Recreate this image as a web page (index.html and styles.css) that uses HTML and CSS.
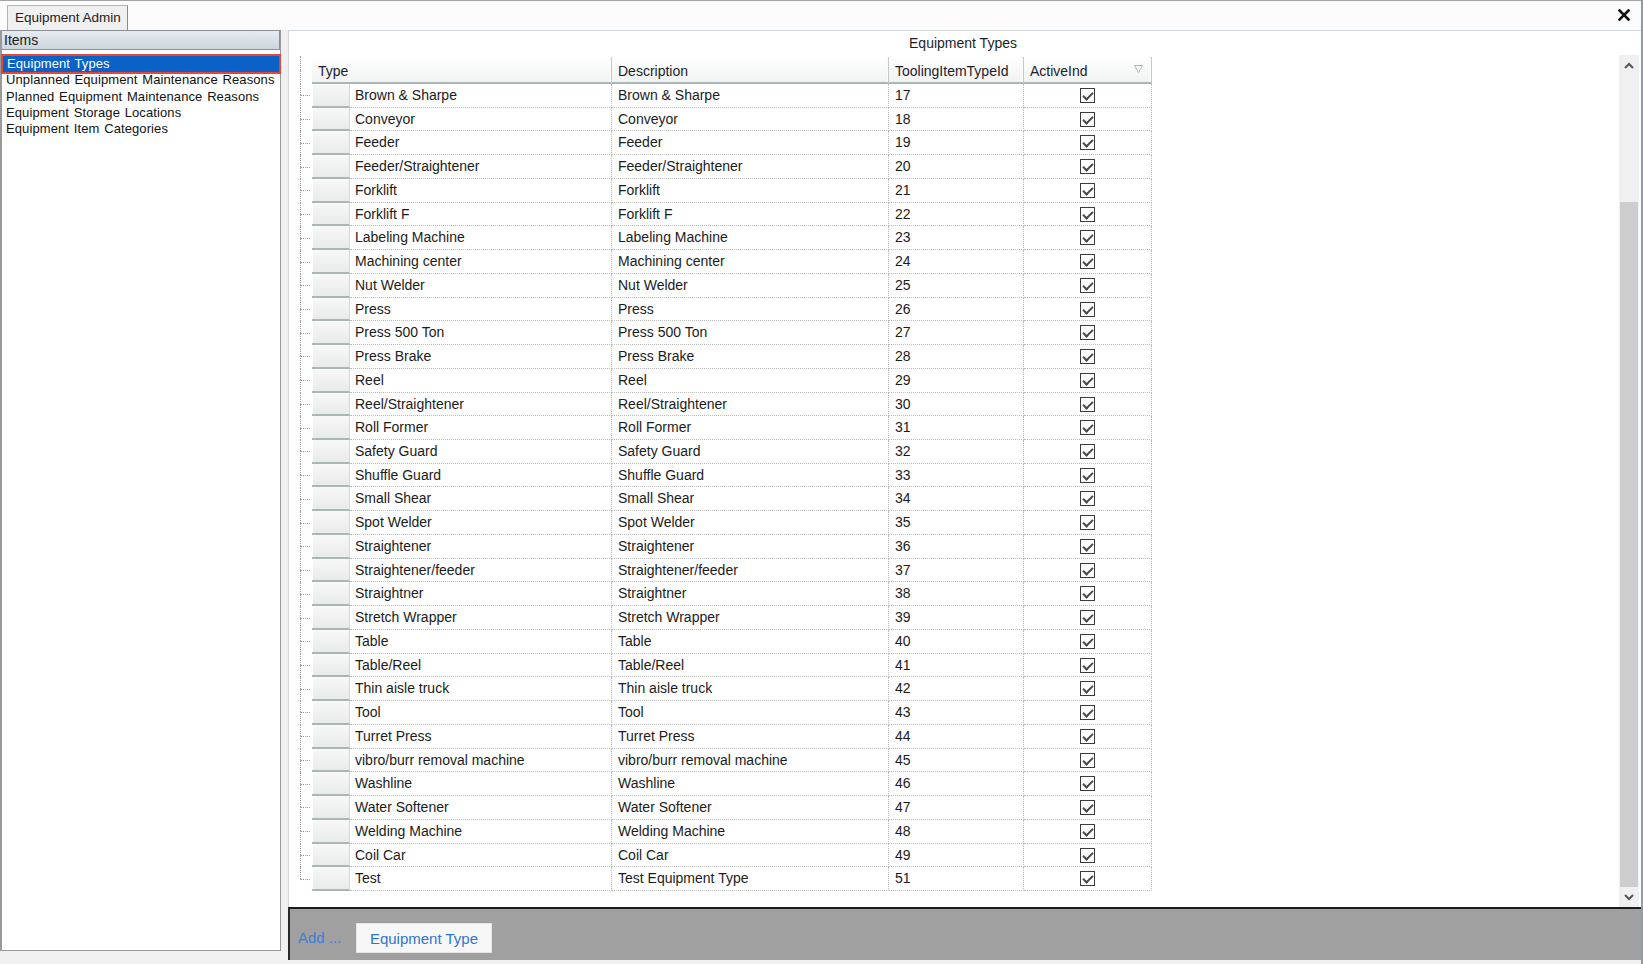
FILE: index.html
```html
<!DOCTYPE html>
<html>
<head>
<meta charset="utf-8">
<title>Equipment Admin</title>
<link rel="stylesheet" href="styles.css">
</head>
<body>
<div class="app">
  <div class="tabstrip">
    <div class="tab">Equipment Admin</div>
    <div class="close"><svg width="12" height="12" viewBox="0 0 12 12"><path d="M1.5 1.5 L10.5 10.5 M10.5 1.5 L1.5 10.5" stroke="#111" stroke-width="2.6" stroke-linecap="square"/></svg></div>
  </div>
  <div class="main">
    <div class="left">
      <div class="items-head">Items</div>
      <ul class="nav">
        <li class="selected">Equipment Types</li>
        <li>Unplanned Equipment Maintenance Reasons</li>
        <li>Planned Equipment Maintenance Reasons</li>
        <li>Equipment Storage Locations</li>
        <li>Equipment Item Categories</li>
      </ul>
    </div>
    <div class="right">
      <div class="content">
        <div class="title">Equipment Types</div>
        <div class="body">
          <div class="gridwrap">
            <div class="hrow">
              <span class="stub stub-head"></span>
              <span class="h h-type">Type</span>
              <span class="h h-desc">Description</span>
              <span class="h h-id">ToolingItemTypeId</span>
              <span class="h h-act">ActiveInd<svg class="filter" width="9" height="8" viewBox="0 0 9 8"><path d="M0.5 0.5 H8.5 L4.5 7.5 Z" fill="none" stroke="#a9b0b8"/></svg></span>
            </div>
            <div class="row"><span class="stub"></span><span class="sel"></span><span class="c c-type">Brown &amp; Sharpe</span><span class="c c-desc">Brown &amp; Sharpe</span><span class="c c-id">17</span><span class="c c-act"><span class="cb"></span></span></div>
            <div class="row"><span class="stub"></span><span class="sel"></span><span class="c c-type">Conveyor</span><span class="c c-desc">Conveyor</span><span class="c c-id">18</span><span class="c c-act"><span class="cb"></span></span></div>
            <div class="row"><span class="stub"></span><span class="sel"></span><span class="c c-type">Feeder</span><span class="c c-desc">Feeder</span><span class="c c-id">19</span><span class="c c-act"><span class="cb"></span></span></div>
            <div class="row"><span class="stub"></span><span class="sel"></span><span class="c c-type">Feeder/Straightener</span><span class="c c-desc">Feeder/Straightener</span><span class="c c-id">20</span><span class="c c-act"><span class="cb"></span></span></div>
            <div class="row"><span class="stub"></span><span class="sel"></span><span class="c c-type">Forklift</span><span class="c c-desc">Forklift</span><span class="c c-id">21</span><span class="c c-act"><span class="cb"></span></span></div>
            <div class="row"><span class="stub"></span><span class="sel"></span><span class="c c-type">Forklift F</span><span class="c c-desc">Forklift F</span><span class="c c-id">22</span><span class="c c-act"><span class="cb"></span></span></div>
            <div class="row"><span class="stub"></span><span class="sel"></span><span class="c c-type">Labeling Machine</span><span class="c c-desc">Labeling Machine</span><span class="c c-id">23</span><span class="c c-act"><span class="cb"></span></span></div>
            <div class="row"><span class="stub"></span><span class="sel"></span><span class="c c-type">Machining center</span><span class="c c-desc">Machining center</span><span class="c c-id">24</span><span class="c c-act"><span class="cb"></span></span></div>
            <div class="row"><span class="stub"></span><span class="sel"></span><span class="c c-type">Nut Welder</span><span class="c c-desc">Nut Welder</span><span class="c c-id">25</span><span class="c c-act"><span class="cb"></span></span></div>
            <div class="row"><span class="stub"></span><span class="sel"></span><span class="c c-type">Press</span><span class="c c-desc">Press</span><span class="c c-id">26</span><span class="c c-act"><span class="cb"></span></span></div>
            <div class="row"><span class="stub"></span><span class="sel"></span><span class="c c-type">Press 500 Ton</span><span class="c c-desc">Press 500 Ton</span><span class="c c-id">27</span><span class="c c-act"><span class="cb"></span></span></div>
            <div class="row"><span class="stub"></span><span class="sel"></span><span class="c c-type">Press Brake</span><span class="c c-desc">Press Brake</span><span class="c c-id">28</span><span class="c c-act"><span class="cb"></span></span></div>
            <div class="row"><span class="stub"></span><span class="sel"></span><span class="c c-type">Reel</span><span class="c c-desc">Reel</span><span class="c c-id">29</span><span class="c c-act"><span class="cb"></span></span></div>
            <div class="row"><span class="stub"></span><span class="sel"></span><span class="c c-type">Reel/Straightener</span><span class="c c-desc">Reel/Straightener</span><span class="c c-id">30</span><span class="c c-act"><span class="cb"></span></span></div>
            <div class="row"><span class="stub"></span><span class="sel"></span><span class="c c-type">Roll Former</span><span class="c c-desc">Roll Former</span><span class="c c-id">31</span><span class="c c-act"><span class="cb"></span></span></div>
            <div class="row"><span class="stub"></span><span class="sel"></span><span class="c c-type">Safety Guard</span><span class="c c-desc">Safety Guard</span><span class="c c-id">32</span><span class="c c-act"><span class="cb"></span></span></div>
            <div class="row"><span class="stub"></span><span class="sel"></span><span class="c c-type">Shuffle Guard</span><span class="c c-desc">Shuffle Guard</span><span class="c c-id">33</span><span class="c c-act"><span class="cb"></span></span></div>
            <div class="row"><span class="stub"></span><span class="sel"></span><span class="c c-type">Small Shear</span><span class="c c-desc">Small Shear</span><span class="c c-id">34</span><span class="c c-act"><span class="cb"></span></span></div>
            <div class="row"><span class="stub"></span><span class="sel"></span><span class="c c-type">Spot Welder</span><span class="c c-desc">Spot Welder</span><span class="c c-id">35</span><span class="c c-act"><span class="cb"></span></span></div>
            <div class="row"><span class="stub"></span><span class="sel"></span><span class="c c-type">Straightener</span><span class="c c-desc">Straightener</span><span class="c c-id">36</span><span class="c c-act"><span class="cb"></span></span></div>
            <div class="row"><span class="stub"></span><span class="sel"></span><span class="c c-type">Straightener/feeder</span><span class="c c-desc">Straightener/feeder</span><span class="c c-id">37</span><span class="c c-act"><span class="cb"></span></span></div>
            <div class="row"><span class="stub"></span><span class="sel"></span><span class="c c-type">Straightner</span><span class="c c-desc">Straightner</span><span class="c c-id">38</span><span class="c c-act"><span class="cb"></span></span></div>
            <div class="row"><span class="stub"></span><span class="sel"></span><span class="c c-type">Stretch Wrapper</span><span class="c c-desc">Stretch Wrapper</span><span class="c c-id">39</span><span class="c c-act"><span class="cb"></span></span></div>
            <div class="row"><span class="stub"></span><span class="sel"></span><span class="c c-type">Table</span><span class="c c-desc">Table</span><span class="c c-id">40</span><span class="c c-act"><span class="cb"></span></span></div>
            <div class="row"><span class="stub"></span><span class="sel"></span><span class="c c-type">Table/Reel</span><span class="c c-desc">Table/Reel</span><span class="c c-id">41</span><span class="c c-act"><span class="cb"></span></span></div>
            <div class="row"><span class="stub"></span><span class="sel"></span><span class="c c-type">Thin aisle truck</span><span class="c c-desc">Thin aisle truck</span><span class="c c-id">42</span><span class="c c-act"><span class="cb"></span></span></div>
            <div class="row"><span class="stub"></span><span class="sel"></span><span class="c c-type">Tool</span><span class="c c-desc">Tool</span><span class="c c-id">43</span><span class="c c-act"><span class="cb"></span></span></div>
            <div class="row"><span class="stub"></span><span class="sel"></span><span class="c c-type">Turret Press</span><span class="c c-desc">Turret Press</span><span class="c c-id">44</span><span class="c c-act"><span class="cb"></span></span></div>
            <div class="row"><span class="stub"></span><span class="sel"></span><span class="c c-type">vibro/burr removal machine</span><span class="c c-desc">vibro/burr removal machine</span><span class="c c-id">45</span><span class="c c-act"><span class="cb"></span></span></div>
            <div class="row"><span class="stub"></span><span class="sel"></span><span class="c c-type">Washline</span><span class="c c-desc">Washline</span><span class="c c-id">46</span><span class="c c-act"><span class="cb"></span></span></div>
            <div class="row"><span class="stub"></span><span class="sel"></span><span class="c c-type">Water Softener</span><span class="c c-desc">Water Softener</span><span class="c c-id">47</span><span class="c c-act"><span class="cb"></span></span></div>
            <div class="row"><span class="stub"></span><span class="sel"></span><span class="c c-type">Welding Machine</span><span class="c c-desc">Welding Machine</span><span class="c c-id">48</span><span class="c c-act"><span class="cb"></span></span></div>
            <div class="row"><span class="stub"></span><span class="sel"></span><span class="c c-type">Coil Car</span><span class="c c-desc">Coil Car</span><span class="c c-id">49</span><span class="c c-act"><span class="cb"></span></span></div>
            <div class="row last"><span class="stub"></span><span class="sel"></span><span class="c c-type">Test</span><span class="c c-desc">Test Equipment Type</span><span class="c c-id">51</span><span class="c c-act"><span class="cb"></span></span></div>
          </div>
          <div class="scrollbar">
            <div class="sb-btn"><svg width="10" height="7" viewBox="0 0 10 7"><path d="M1 6 L5 2 L9 6" fill="none" stroke="#555" stroke-width="2"/></svg></div>
            <div class="sb-track"><div class="sb-thumb"></div></div>
            <div class="sb-btn"><svg width="10" height="7" viewBox="0 0 10 7"><path d="M1 1 L5 5 L9 1" fill="none" stroke="#555" stroke-width="2"/></svg></div>
          </div>
        </div>
      </div>
      <div class="actionbar">
        <span class="add">Add ...</span>
        <span class="btn">Equipment Type</span>
      </div>
    </div>
  </div>
</div>
</body>
</html>
```

FILE: styles.css
```css
* { box-sizing: border-box; }
html, body { margin: 0; padding: 0; }
body {
  width: 1643px;
  height: 964px;
  overflow: hidden;
  background: #f0f0f0;
  font-family: "Liberation Sans", Arial, sans-serif;
  color: #1b1b1b;
}
.app {
  height: 964px;
  display: flex;
  flex-direction: column;
  border-right: 2px solid #8c9bb0;
}
.tabstrip {
  height: 30px;
  flex: none;
  display: flex;
  align-items: flex-end;
  justify-content: space-between;
  background: #fcfcfc;
  border-top: 1px solid #a3a3a3;
}
.tab {
  margin-left: 7px;
  height: 25px;
  padding: 4px 6px 0 7px;
  font-size: 13.5px;
  background: #f0f0f0;
  border: 1px solid #b4b4b4;
  border-right-color: #8a8a8a;
  border-bottom: none;
  color: #222;
}
.close {
  align-self: flex-start;
  margin-top: 8px;
  margin-right: 11px;
  line-height: 0;
}
.main {
  flex: 1;
  display: flex;
  gap: 7px;
  min-height: 0;
}
.left {
  width: 281px;
  margin-bottom: 13px;
  background: #fff;
  border: 1px solid #9a9a9a;
  border-top: none;
  border-left-width: 2px;
  display: flex;
  flex-direction: column;
}
.items-head {
  height: 20px;
  font-size: 14px;
  padding: 1px 0 0 2px;
  background: linear-gradient(#e6ebf1, #cdd5de);
  border: 1px solid #8b9098;
  border-left: none;
  color: #1a1a1a;
}
.nav {
  list-style: none;
  margin: 0;
  padding: 6px 0 0 0;
  font-size: 13px;
  color: #111;
}
.nav li {
  height: 16.3px;
  line-height: 16px;
  padding-left: 4px;
  white-space: nowrap;
  letter-spacing: 0.1px;
  word-spacing: 1px;
}
.nav li.selected {
  background: #0b62c6;
  color: #fff;
  outline: 2px solid #e5453b;
  margin: 0 1px;
}
.right {
  flex: 1;
  display: flex;
  flex-direction: column;
  margin-bottom: 4px;
}
.content {
  flex: 1;
  display: flex;
  flex-direction: column;
  background: #fff;
  border-top: 1px solid #d3d8df;
  border-left: 1px solid #d6d6d6;
  min-height: 0;
}
.title {
  height: 24px;
  flex: none;
  text-align: center;
  font-size: 14px;
  padding-top: 4px;
  padding-right: 4px;
  color: #1e1e2a;
}
.body {
  flex: 1;
  display: flex;
  min-height: 0;
}
.gridwrap {
  flex: 1;
  padding-left: 11px;
  font-size: 14px;
}
.hrow {
  display: flex;
  height: 29px;
}
.stub {
  width: 12px;
  flex: none;
  display: flex;
  flex-direction: column;
}
.stub::before {
  content: "";
  flex: 1;
  border-left: 1px dotted #9c9c9c;
}
.stub::after {
  content: "";
  flex: 1;
  border-left: 1px dotted #9c9c9c;
  border-top: 1px dotted #9c9c9c;
  margin-right: 2px;
}
.stub-head { margin-top: 1px; }
.stub-head::after { border-top: none; }
.row.last .stub::after { border-left: none; }
.h {
  margin-top: 2px;
  height: 27px;
  padding: 6px 0 0 6px;
  background: linear-gradient(#ffffff, #f1f2f2);
  border-bottom: 2px solid #a9b7b7;
  border-right: 1px solid #c3caca;
  box-shadow: inset -1px 0 0 #fbfbfb;
  color: #1c1c2c;
  white-space: nowrap;
}
.h-type { width: 300px; }
.h-desc { width: 277px; }
.h-id { width: 135px; }
.h-act {
  width: 128px;
  display: flex;
  justify-content: space-between;
  padding-right: 8px;
}
.filter { margin-top: 2px; }
.row {
  display: flex;
  height: 23.74px;
}
.sel {
  width: 38px;
  flex: none;
  background: linear-gradient(#f8f8f8, #e9eaea);
  border-bottom: 2px solid #aab7b7;
  border-right: 1px solid #d5d9d9;
  box-shadow: inset 1px 0 0 #ffffff;
}
.c {
  padding: 3px 0 0 5px;
  line-height: 17px;
  border-right: 1px dotted #bcbcbc;
  border-bottom: 1px dotted #bcbcbc;
  white-space: nowrap;
  overflow: hidden;
  color: #1b1b1b;
}
.c-type { width: 262px; }
.c-desc { width: 277px; padding-left: 6px; }
.c-id { width: 135px; padding-left: 6px; }
.c-act {
  width: 128px;
  display: flex;
  justify-content: center;
  padding: 4px 0 0 0;
}
.cb {
  position: relative;
  width: 15px;
  height: 15px;
  border: 1px solid #3c3c3c;
  background: #fff;
}
.cb::after {
  content: "";
  position: absolute;
  left: 4px;
  top: 1px;
  width: 4px;
  height: 8px;
  border-right: 2px solid #4a4a4a;
  border-bottom: 2px solid #4a4a4a;
  transform: rotate(45deg);
}
.scrollbar {
  width: 20px;
  flex: none;
  margin-right: 2px;
  display: flex;
  flex-direction: column;
  background: #f0f0f0;
}
.sb-btn {
  height: 20px;
  flex: none;
  display: flex;
  align-items: center;
  justify-content: center;
}
.sb-track {
  flex: 1;
  display: flex;
  flex-direction: column;
  padding-top: 127px;
}
.sb-thumb {
  flex: 1;
  background: #cdcdcd;
  margin: 0 1px;
}
.actionbar {
  height: 53px;
  flex: none;
  display: flex;
  align-items: center;
  gap: 0;
  background: #a0a0a0;
  border-top: 2px solid #1c1c1c;
  border-left: 2px solid #2a2a2a;
  padding-left: 8px;
}
.add {
  font-size: 15px;
  color: #3a7fd6;
  width: 58px;
  margin-top: 6px;
}
.btn {
  margin-top: 6px;
  width: 136px;
  height: 30px;
  line-height: 30px;
  text-align: center;
  font-size: 15px;
  color: #2f76cc;
  background: #f7f7f7;
  border: 1px solid #e4e4e4;
}
```
